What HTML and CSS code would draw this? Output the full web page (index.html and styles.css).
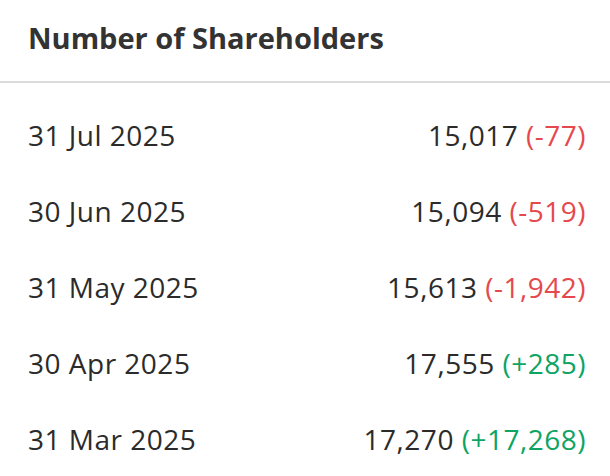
FILE: index.html
```html
<!DOCTYPE html>
<html>
<head>
<meta charset="utf-8">
<link rel="stylesheet" href="styles.css">
</head>
<body>
<div class="card">
  <div class="header"><h2 class="title">Number of Shareholders</h2></div>
  <ul class="list">
    <li class="row"><span class="date">31 Jul 2025</span><span class="val">15,017 <span class="neg">(-77)</span></span></li>
    <li class="row"><span class="date">30 Jun 2025</span><span class="val">15,094 <span class="neg">(-519)</span></span></li>
    <li class="row"><span class="date">31 May 2025</span><span class="val">15,613 <span class="neg">(-1,942)</span></span></li>
    <li class="row"><span class="date">30 Apr 2025</span><span class="val">17,555 <span class="pos">(+285)</span></span></li>
    <li class="row"><span class="date">31 Mar 2025</span><span class="val">17,270 <span class="pos">(+17,268)</span></span></li>
  </ul>
</div>
</body>
</html>
```
FILE: styles.css
```css
html, body { margin: 0; padding: 0; background: #fff; }
body { font-family: "Open Sans", Lato, sans-serif; color: #2b2b2b; }
.card { width: 610px; }
.header { height: 75px; border-bottom: 2px solid #dcdcdc; padding: 0 28px 6px; display: flex; align-items: center; }
.title { margin: 0; font-size: 29px; font-weight: 700; color: #333; letter-spacing: 0; }
.list { list-style: none; margin: 0; padding: 14px 24px 0 28px; }
.row { height: 76px; display: flex; justify-content: space-between; align-items: center; font-size: 28px; letter-spacing: 0.5px; }
.neg { color: #e5484d; }
.pos { color: #0ea464; }
```
